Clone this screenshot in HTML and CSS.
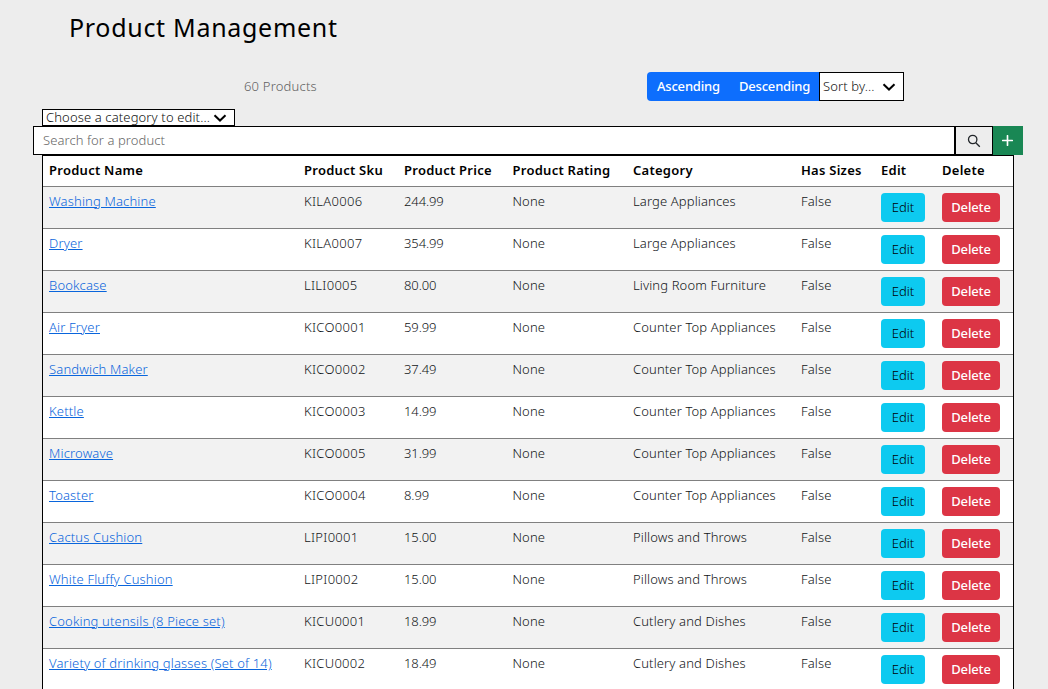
FILE: index.html
```html
<!DOCTYPE html>
<html lang="en">
<head>
<meta charset="utf-8">
<title>Product Management</title>
<link rel="stylesheet" href="styles.css">
</head>
<body>
<h1 class="title">Product Management</h1>
<div class="toolbar">
  <p class="count">60 Products</p>
  <div class="sorting">
    <a class="sort-btn sort-asc">Ascending</a><a class="sort-btn sort-desc">Descending</a>
    <div class="select sort-select"><span>Sort by...</span><svg class="chevron" viewBox="0 0 14 8"><path d="M1.5 1.2 7 6.5l5.500-5.300"/></svg></div>
  </div>
</div>
<div class="select category-select"><span>Choose a category to edit...</span><svg class="chevron" viewBox="0 0 14 8"><path d="M1.500 1.200 7 6.500l5.500-5.300"/></svg></div>
<form class="search">
  <div class="search-field"><span class="placeholder">Search for a product</span></div>
  <div class="search-btn"><svg viewBox="0 0 14 14"><circle cx="5.700" cy="5.500" r="4.200"/><path d="m8.800 8.700 4 4"/></svg></div>
  <div class="add-btn"><svg viewBox="0 0 12 12"><path d="M6 .8v10.400M.8 6h10.400"/></svg></div>
</form>
<table class="products">
  <colgroup><col class="c-name"><col class="c-sku"><col class="c-price"><col class="c-rating"><col class="c-cat"><col class="c-sizes"><col class="c-edit"><col></colgroup>
  <thead><tr><th>Product Name</th><th>Product Sku</th><th>Product Price</th><th>Product Rating</th><th>Category</th><th>Has Sizes</th><th>Edit</th><th>Delete</th></tr></thead>
  <tbody id="rows"></tbody>
</table>
<script src="products.js"></script>
</body>
</html>
```

FILE: styles.css
```css
* { box-sizing: border-box; }
html { overflow: hidden; }
body { margin: 0; height: 689px; overflow: hidden; background: #ededed; color: #000; font: 300 13px/20px "Noto Sans", sans-serif; }
.title { margin: 0; padding: 9px 0 0 69px; height: 72px; font-size: 25px; line-height: 36px; font-weight: 400; letter-spacing: .7px; }
.toolbar { display: flex; height: 37px; }
.count { margin: 0; padding: 4px 0 0 244px; width: 647px; color: #606060; letter-spacing: .2px; }
.sorting { display: flex; height: 29px; }
.sort-btn { background: #0d6efd; color: #fff; font-weight: 500; line-height: 28px; padding-left: 10px; white-space: nowrap; letter-spacing: -.2px; }
.sort-asc { width: 82px; border-radius: 4px 0 0 4px; }
.sort-desc { width: 90px; }
.select { display: flex; align-items: center; justify-content: space-between; border: 1px solid #000; background: #fff; color: #111; padding: 0 7px 0 3px; white-space: nowrap; letter-spacing: .13px; }
.select span { margin-top: -1px; }
.sort-select { width: 85px; height: 29px; }
.category-select { width: 193px; height: 17px; margin-left: 42px; }
.chevron { width: 14px; height: 8px; flex: none; fill: none; stroke: #000; stroke-width: 2; }
.search { display: flex; width: 990px; height: 29px; margin-left: 33px; }
.search-field { width: 922px; border: 1px solid #000; background: #fff; padding: 3px 9px; color: #666; letter-spacing: .08px; }
.search-btn { width: 38px; border: 1px solid #000; display: flex; align-items: center; justify-content: center; padding-right: 1px; }
.search-btn svg { width: 14px; height: 14px; fill: none; stroke: #212529; stroke-width: 1.300; }
.add-btn { width: 30px; background: #198754; display: flex; align-items: center; justify-content: center; padding-right: 1px; }
.add-btn svg { width: 11px; height: 11px; fill: none; stroke: #fff; stroke-width: 1.800; stroke-linecap: round; }
.products { width: 972px; margin-left: 42px; table-layout: fixed; border-collapse: separate; border-spacing: 0; border: 1px solid #000; background: #fff; }
.c-name { width: 255px; } .c-sku { width: 100px; } .c-price { width: 108.500px; } .c-rating { width: 120.500px; }
.c-cat { width: 168px; } .c-sizes { width: 80px; } .c-edit { width: 61px; }
th, td { padding: 4px 0 0 6px; text-align: left; vertical-align: top; border-bottom: 1px solid #808080; white-space: nowrap; }
th { height: 31px; font-weight: 600; letter-spacing: .26px; }
td { height: 42px; color: #111417; letter-spacing: .13px; }
td:nth-child(2) { letter-spacing: .3px; }
td:nth-child(3) { letter-spacing: -.1px; }
tbody tr:nth-child(odd) { background: #f2f2f2; }
.link { color: #0965dc; text-decoration: underline; letter-spacing: .16px; }
.btn { display: block; height: 29px; margin-top: 2px; border-radius: 4px; line-height: 28px; text-align: center; letter-spacing: 0; }
.btn-edit { width: 44px; background: #0dcaf0; color: #000; }
.btn-delete { width: 58px; background: #dc3545; color: #fff; font-weight: 500; letter-spacing: -.15px; }
```

FILE: products.js
```js
const products = [
  ["Washing Machine", "KILA0006", "244.99", "Large Appliances"],
  ["Dryer", "KILA0007", "354.99", "Large Appliances"],
  ["Bookcase", "LILI0005", "80.00", "Living Room Furniture"],
  ["Air Fryer", "KICO0001", "59.99", "Counter Top Appliances"],
  ["Sandwich Maker", "KICO0002", "37.49", "Counter Top Appliances"],
  ["Kettle", "KICO0003", "14.99", "Counter Top Appliances"],
  ["Microwave", "KICO0005", "31.99", "Counter Top Appliances"],
  ["Toaster", "KICO0004", "8.99", "Counter Top Appliances"],
  ["Cactus Cushion", "LIPI0001", "15.00", "Pillows and Throws"],
  ["White Fluffy Cushion", "LIPI0002", "15.00", "Pillows and Throws"],
  ["Cooking utensils (8 Piece set)", "KICU0001", "18.99", "Cutlery and Dishes"],
  ["Variety of drinking glasses (Set of 14)", "KICU0002", "18.49", "Cutlery and Dishes"]
];
document.getElementById("rows").innerHTML = products.map(([name, sku, price, category]) =>
  `<tr><td><a class="link">${name}</a></td><td>${sku}</td><td>${price}</td><td>None</td><td>${category}</td><td>False</td>` +
  `<td><a class="btn btn-edit">Edit</a></td><td><a class="btn btn-delete">Delete</a></td></tr>`).join("");
```
